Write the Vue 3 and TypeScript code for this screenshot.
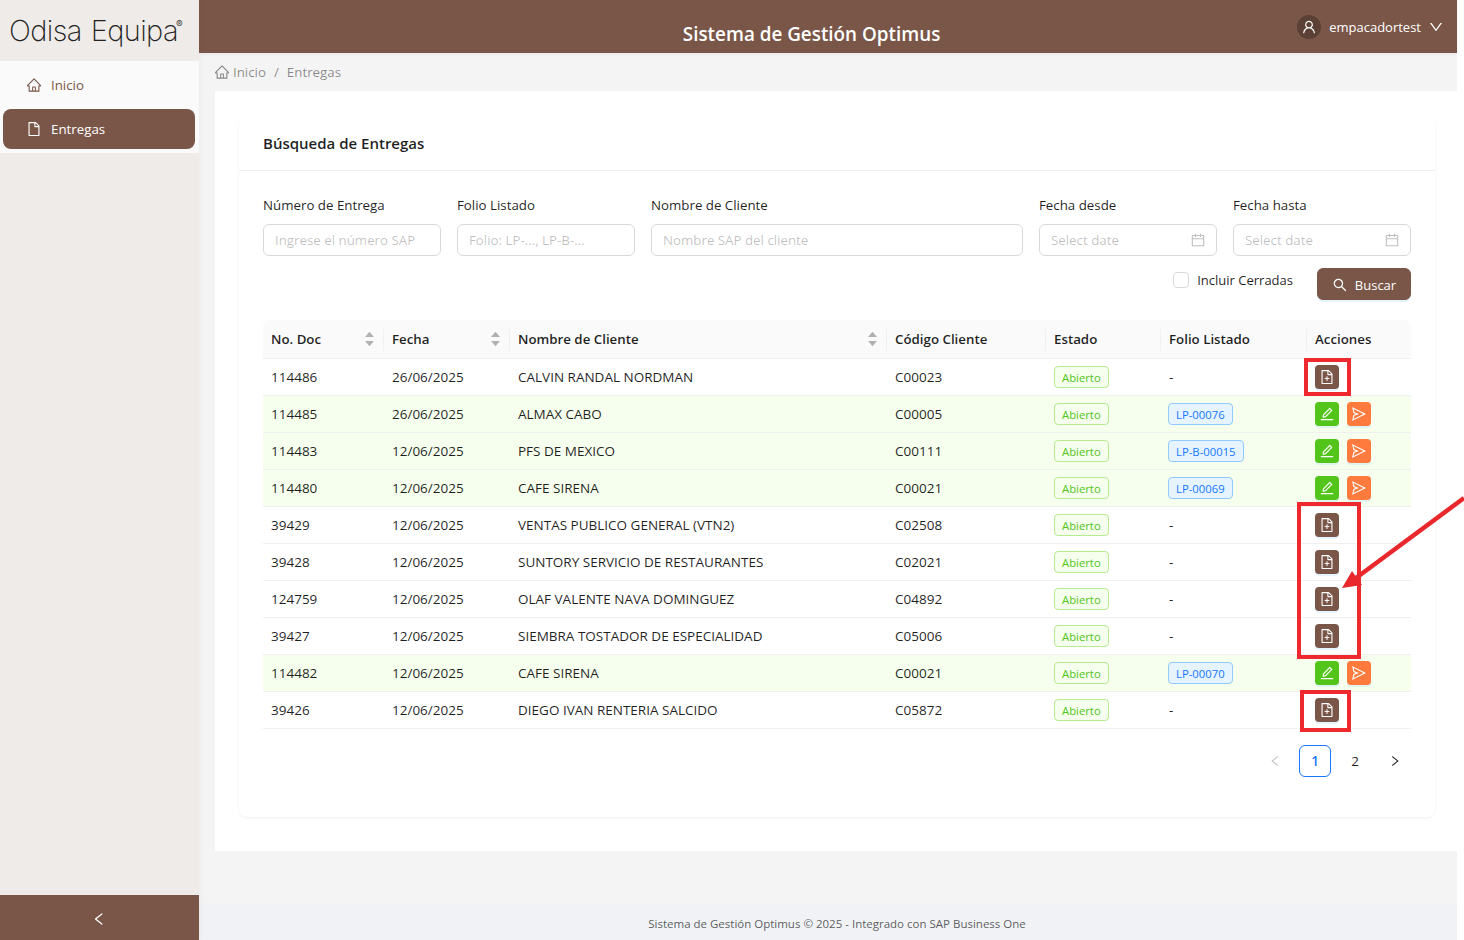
<script setup lang="ts">
const i = {
  home: 'M946.5 505L560.1 118.8l-25.9-25.9a31.5 31.5 0 0 0-44.4 0L77.5 505a63.9 63.9 0 0 0-18.8 46c.4 35.2 29.7 63.3 64.9 63.3h42.5V940h691.8V614.3h43.4c17.1 0 33.2-6.7 45.3-18.8a63.6 63.6 0 0 0 18.7-45.3c0-17-6.7-33.1-18.8-45.2zM568 868H456V664h112v204zm217.9-325.7V868H632V640c0-22.1-17.9-40-40-40H432c-22.1 0-40 17.9-40 40v228H238.1V542.3h-96l370-369.7 23.1 23.1L882 542.3h-96.1z',
  file: 'M854.6 288.6L639.4 73.4c-6-6-14.1-9.4-22.6-9.4H192c-17.7 0-32 14.3-32 32v832c0 17.7 14.3 32 32 32h640c17.7 0 32-14.3 32-32V311.3c0-8.5-3.4-16.7-9.4-22.7zM790.2 326H602V137.8L790.2 326zm1.8 562H232V136h302v216a42 42 0 0 0 42 42h216v494z',
  fileAdd: 'M854.6 288.6L639.4 73.4c-6-6-14.1-9.4-22.6-9.4H192c-17.7 0-32 14.3-32 32v832c0 17.7 14.3 32 32 32h640c17.7 0 32-14.3 32-32V311.3c0-8.5-3.4-16.7-9.4-22.7zM790.2 326H602V137.8L790.2 326zm1.8 562H232V136h302v216a42 42 0 0 0 42 42h216v494zM544 472c0-4.4-3.6-8-8-8h-48c-4.4 0-8 3.6-8 8v108H372c-4.4 0-8 3.6-8 8v48c0 4.4 3.6 8 8 8h108v108c0 4.4 3.6 8 8 8h48c4.4 0 8-3.6 8-8V644h108c4.4 0 8-3.6 8-8v-48c0-4.4-3.6-8-8-8H544V472z',
  edit: 'M257.7 752c2 0 4-.2 6-.5L431.9 722c2-.4 3.9-1.3 5.3-2.8l423.9-423.9a9.96 9.96 0 0 0 0-14.1L694.9 114.9c-1.9-1.9-4.4-2.9-7.1-2.9s-5.2 1-7.1 2.9L256.8 538.8c-1.5 1.5-2.4 3.3-2.8 5.3l-29.5 168.2a33.5 33.5 0 0 0 9.4 29.8c6.6 6.4 14.9 9.9 23.8 9.9zm67.4-174.4L687.8 215l73.3 73.3-362.7 362.6-88.9 15.7 15.6-89zM880 836H144c-17.7 0-32 14.3-32 32v36c0 4.4 3.6 8 8 8h784c4.4 0 8-3.6 8-8v-36c0-17.7-14.3-32-32-32z',
  send: 'M931.4 498.9L94.9 79.5c-3.4-1.7-7.3-2.1-11-1.2a15.99 15.99 0 0 0-11.7 19.3l86.2 352.2c1.3 5.3 5.2 9.6 10.4 11.3l147.7 50.7-147.6 50.7c-5.2 1.8-9.1 6-10.3 11.3L72.2 926.5c-.9 3.7-.5 7.6 1.2 10.9 3.9 7.9 13.5 11.1 21.5 7.2l836.5-417c3.1-1.5 5.6-4.1 7.2-7.1 3.9-8 .7-17.6-7.2-21.6zM170.8 826.3l50.3-205.6 295.2-101.3c2.3-.8 4.2-2.6 5-5 1.4-4.2-.8-8.7-5-10.2L221.1 403 171 198.2l628 314.9-628.2 313.2z',
  search: 'M909.6 854.5L649.9 594.8C690.2 542.7 712 479 712 412c0-80.2-31.3-155.4-87.9-212.1-56.6-56.7-132-87.9-212.1-87.9s-155.5 31.3-212.1 87.9C143.2 256.5 112 331.8 112 412c0 80.1 31.3 155.5 87.9 212.1C256.5 680.8 331.8 712 412 712c67 0 130.6-21.8 182.7-62l259.7 259.6a8.2 8.2 0 0 0 11.6 0l43.6-43.5a8.2 8.2 0 0 0 0-11.6zM570.4 570.4C528 612.7 471.8 636 412 636s-116-23.3-158.4-65.6C211.3 528 188 471.8 188 412s23.3-116.1 65.6-158.4C296 211.3 352.2 188 412 188s116.1 23.2 158.4 65.6S636 352.2 636 412s-23.3 116.1-65.6 158.4z',
  calendar: 'M880 184H712v-64c0-4.4-3.6-8-8-8h-56c-4.4 0-8 3.6-8 8v64H384v-64c0-4.4-3.6-8-8-8h-56c-4.4 0-8 3.6-8 8v64H144c-17.7 0-32 14.3-32 32v664c0 17.7 14.3 32 32 32h736c17.7 0 32-14.3 32-32V216c0-17.7-14.3-32-32-32zm-40 656H184V460h656v380zM184 392V256h128v48c0 4.4 3.6 8 8 8h56c4.4 0 8-3.6 8-8v-48h256v48c0 4.4 3.6 8 8 8h56c4.4 0 8-3.6 8-8v-48h128v136H184z',
  user: 'M858.5 763.6a374 374 0 0 0-80.6-119.5 375.63 375.63 0 0 0-119.5-80.6c-.4-.2-.8-.3-1.2-.5C719.5 518 760 444.7 760 362c0-137-111-248-248-248S264 225 264 362c0 82.7 40.5 156 102.8 201.1-.4.2-.8.3-1.2.5-44.8 18.9-85 46-119.5 80.6a375.63 375.63 0 0 0-80.6 119.5A371.7 371.7 0 0 0 136 901.8a8 8 0 0 0 8 8.2h60c4.4 0 7.9-3.5 8-7.8 2-77.2 33-149.5 87.8-204.3 56.7-56.7 132-87.9 212.2-87.9s155.5 31.2 212.2 87.9C779 752.7 810 825 812 902.2c.1 4.4 3.6 7.8 8 7.8h60a8 8 0 0 0 8-8.2c-1-47.8-10.9-94.3-29.5-138.2zM512 534c-45.9 0-89.1-17.9-121.6-50.4S340 407.9 340 362c0-45.9 17.9-89.1 50.4-121.6S466.1 190 512 190s89.1 17.9 121.6 50.4S684 316.1 684 362c0 45.9-17.9 89.1-50.4 121.6S557.9 534 512 534z',
  down: 'M884 256h-75c-5.1 0-9.9 2.5-12.9 6.6L512 654.2 227.9 262.6c-3-4.1-7.8-6.6-12.9-6.6h-75c-6.5 0-10.3 7.4-6.5 12.7l352.6 486.1c12.8 17.6 39 17.6 51.7 0l352.6-486.1c3.9-5.3.1-12.7-6.4-12.7z',
  left: 'M724 218.3V141c0-6.7-7.7-10.4-12.9-6.3L260.3 486.8a31.86 31.86 0 0 0 0 50.3l450.8 352.1c5.3 4.1 12.9.4 12.9-6.3v-77.3c0-4.9-2.3-9.6-6.1-12.6l-360-281 360-281.1c3.8-3 6.1-7.7 6.1-12.6z',
  right: 'M765.7 486.8L314.9 134.7A7.97 7.97 0 0 0 302 141v77.3c0 4.9 2.3 9.6 6.1 12.6l360 281.1-360 281.1c-3.9 3-6.1 7.7-6.1 12.6V883c0 6.7 7.7 10.4 12.9 6.3l450.8-352.1a31.96 31.96 0 0 0 0-50.4z',
  caretUp: 'M858.9 689L530.5 308.2c-9.4-10.9-27.5-10.9-37 0L165.1 689c-12.2 14.2-1.2 35 18.5 35h656.8c19.7 0 30.7-20.8 18.5-35z',
  caretDown: 'M840.4 300H183.6c-19.7 0-30.7 20.8-18.5 35l328.4 380.8c9.4 10.9 27.5 10.9 37 0L858.9 335c12.2-14.2 1.2-35-18.5-35z'
}

interface Row { doc: string; date: string; name: string; code: string; folio: string }
const rows: Row[] = [
  { doc: '114486', date: '26/06/2025', name: 'CALVIN RANDAL NORDMAN', code: 'C00023', folio: '' },
  { doc: '114485', date: '26/06/2025', name: 'ALMAX CABO', code: 'C00005', folio: 'LP-00076' },
  { doc: '114483', date: '12/06/2025', name: 'PFS DE MEXICO', code: 'C00111', folio: 'LP-B-00015' },
  { doc: '114480', date: '12/06/2025', name: 'CAFE SIRENA', code: 'C00021', folio: 'LP-00069' },
  { doc: '39429', date: '12/06/2025', name: 'VENTAS PUBLICO GENERAL (VTN2)', code: 'C02508', folio: '' },
  { doc: '39428', date: '12/06/2025', name: 'SUNTORY SERVICIO DE RESTAURANTES', code: 'C02021', folio: '' },
  { doc: '124759', date: '12/06/2025', name: 'OLAF VALENTE NAVA DOMINGUEZ', code: 'C04892', folio: '' },
  { doc: '39427', date: '12/06/2025', name: 'SIEMBRA TOSTADOR DE ESPECIALIDAD', code: 'C05006', folio: '' },
  { doc: '114482', date: '12/06/2025', name: 'CAFE SIRENA', code: 'C00021', folio: 'LP-00070' },
  { doc: '39426', date: '12/06/2025', name: 'DIEGO IVAN RENTERIA SALCIDO', code: 'C05872', folio: '' }
]
const heads = [
  { t: 'No. Doc', s: true }, { t: 'Fecha', s: true }, { t: 'Nombre de Cliente', s: true },
  { t: 'Código Cliente', s: false }, { t: 'Estado', s: false }, { t: 'Folio Listado', s: false }, { t: 'Acciones', s: false }
]
const fields = [
  { l: 'Número de Entrega', p: 'Ingrese el número SAP', c: '', cal: false },
  { l: 'Folio Listado', p: 'Folio: LP-..., LP-B-...', c: '', cal: false },
  { l: 'Nombre de Cliente', p: 'Nombre SAP del cliente', c: 'wide', cal: false },
  { l: 'Fecha desde', p: 'Select date', c: '', cal: true },
  { l: 'Fecha hasta', p: 'Select date', c: '', cal: true }
]
</script>

<template>
  <div class="root">
    <aside class="sider">
      <div class="logo"><span>Odisa</span><span class="logo-b">Equipa</span><sup>®</sup></div>
      <nav class="menu">
        <a class="item"><svg class="ic" viewBox="64 64 896 896"><path :d="i.home" /></svg>Inicio</a>
        <a class="item active"><svg class="ic" viewBox="64 64 896 896"><path :d="i.file" /></svg>Entregas</a>
      </nav>
      <div class="collapse"><svg class="ic" viewBox="64 64 896 896"><path :d="i.left" /></svg></div>
    </aside>

    <div class="main">
      <header class="top">
        <div class="title">Sistema de Gestión Optimus</div>
        <div class="user">
          <span class="avatar"><svg class="ic" viewBox="64 64 896 896"><path :d="i.user" /></svg></span>
          <span class="uname">empacadortest</span>
          <svg class="ic" viewBox="64 64 896 896"><path :d="i.down" /></svg>
        </div>
      </header>

      <div class="crumbs">
        <svg class="ic" viewBox="64 64 896 896"><path :d="i.home" /></svg>
        <span class="c1">Inicio</span><span class="sep">/</span><span>Entregas</span>
      </div>

      <div class="content">
        <section class="card">
          <h2 class="card-h">Búsqueda de Entregas</h2>
          <div class="card-b">
            <div class="form">
              <label v-for="f in fields" :key="f.l" class="field" :class="f.c">
                <span class="lab">{{ f.l }}</span>
                <span class="input"><span>{{ f.p }}</span><svg v-if="f.cal" class="ic" viewBox="64 64 896 896"><path :d="i.calendar" /></svg></span>
              </label>
            </div>
            <div class="tools">
              <span class="chk"><span class="box"></span><span>Incluir Cerradas</span></span>
              <button class="buscar" type="button"><svg class="ic" viewBox="64 64 896 896"><path :d="i.search" /></svg>Buscar</button>
            </div>

            <table class="tbl">
              <colgroup>
                <col class="c-a" /><col class="c-b" /><col class="c-c" /><col class="c-d" /><col class="c-e" /><col class="c-f" /><col class="c-g" />
              </colgroup>
              <thead>
                <tr>
                  <th v-for="h in heads" :key="h.t">
                    <span class="th-in">{{ h.t }}
                      <span v-if="h.s" class="sort">
                        <svg viewBox="64 64 896 896"><path :d="i.caretUp" /></svg>
                        <svg viewBox="64 64 896 896"><path :d="i.caretDown" /></svg>
                      </span>
                    </span>
                  </th>
                </tr>
              </thead>
              <tbody>
                <tr v-for="r in rows" :key="r.doc" :class="{ hl: r.folio }">
                  <td>{{ r.doc }}</td>
                  <td>{{ r.date }}</td>
                  <td>{{ r.name }}</td>
                  <td>{{ r.code }}</td>
                  <td><span class="tag green">Abierto</span></td>
                  <td><span v-if="r.folio" class="tag blue">{{ r.folio }}</span><template v-else>-</template></td>
                  <td>
                    <div class="acts">
                      <template v-if="r.folio">
                        <button class="act g" type="button"><svg class="ic" viewBox="64 64 896 896"><path :d="i.edit" /></svg></button>
                        <button class="act o" type="button"><svg class="ic" viewBox="64 64 896 896"><path :d="i.send" /></svg></button>
                      </template>
                      <button v-else class="act b" type="button"><svg class="ic" viewBox="64 64 896 896"><path :d="i.fileAdd" /></svg></button>
                    </div>
                  </td>
                </tr>
              </tbody>
            </table>

            <div class="pager">
              <span class="pg dis"><svg class="ic12" viewBox="64 64 896 896"><path :d="i.left" /></svg></span>
              <span class="pg cur">1</span>
              <span class="pg">2</span>
              <span class="pg"><svg class="ic12" viewBox="64 64 896 896"><path :d="i.right" /></svg></span>
            </div>
          </div>
        </section>
      </div>

      <footer class="foot">Sistema de Gestión Optimus © 2025 - Integrado con SAP Business One</footer>
    </div>

    <div class="mark m1"></div>
    <div class="mark m2"></div>
    <div class="mark m3"></div>
    <svg class="arrow" viewBox="0 0 1464 940" width="1464" height="940">
      <line x1="1464" y1="498" x2="1356" y2="578" stroke="#e8282d" stroke-width="4.5" />
      <polygon points="1342,588 1352,571 1362,585" fill="#e8282d" />
    </svg>
  </div>
</template>

<style>
html, body { margin: 0; background: #fff; }
</style>

<style scoped>
.root {
  position: relative; display: flex; width: 1457px; height: 940px; overflow: visible;
  font-family: "Open Sans", "Noto Sans", sans-serif; font-size: 13.3px; color: rgba(0,0,0,.88);
}
.ic { width: 14px; height: 14px; fill: currentColor; flex: none; display: block; }
.ic12 { width: 12px; height: 12px; fill: currentColor; display: block; }

.sider { position: relative; z-index: 1; width: 199px; flex: none; display: flex; flex-direction: column; background: #efebe8; box-shadow: 2px 0 6px rgba(0,0,0,.03); }
.logo { height: 61px; box-sizing: border-box; padding: 12px 0 0 9px; font-family: Inter, sans-serif; font-weight: 200; font-size: 29px; line-height: 38px; color: #222; white-space: nowrap; letter-spacing: -.6px; }
.logo-b { margin-left: 9px; }
.logo sup { font-size: 10px; line-height: 0; vertical-align: 13px; color: #444; letter-spacing: 0; margin-left: -2px; font-weight: 400; }
.menu { background: #fafafa; height: 92px; box-sizing: border-box; padding: 4px 4px 4px 3px; }
.item { display: flex; align-items: center; gap: 10px; height: 40px; padding-left: 24px; border-radius: 8px; color: #7a5648; }
.item + .item { margin-top: 4px; }
.item.active { background: #7a5648; color: #fff; }
.collapse { margin-top: auto; height: 45px; box-sizing: border-box; padding: 3px 2px 0 0; background: #7a5648; color: #fff; display: flex; align-items: center; justify-content: center; }

.main { flex: 1; min-width: 0; display: flex; flex-direction: column; background: #f4f4f4; }
.top { position: relative; height: 53px; flex: none; background: #7a5648; color: #fff; display: flex; align-items: center; padding-right: 14px; box-shadow: 0 1px 4px rgba(0,0,0,.06); }
.title { flex: 1; text-align: center; font-size: 18.85px; font-weight: 600; padding: 14px 16px 0 143px; line-height: 26px; }
.user { display: flex; align-items: center; gap: 8px; }
.avatar { width: 24px; height: 24px; border-radius: 50%; background: #5b4035; display: flex; align-items: center; justify-content: center; }
.uname { font-size: 13px; }
.crumbs { height: 38px; flex: none; display: flex; align-items: center; padding-left: 16px; gap: 4px; color: rgba(0,0,0,.45); }
.sep { margin: 0 4px; }
.content { margin-left: 16px; height: 760px; flex: none; background: #fff; padding: 24px 22px 0 24px; box-sizing: border-box; }
.card { height: 702px; border-radius: 8px; background: #fff; box-shadow: 0 1px 2px rgba(0,0,0,.03), 0 1px 6px -1px rgba(0,0,0,.02), 0 2px 4px rgba(0,0,0,.02); }
.card-h { margin: 0; height: 56px; box-sizing: border-box; padding: 0 24px; border-bottom: 1px solid #f0f0f0; font-size: 15px; font-weight: 600; display: flex; align-items: center; }
.card-b { padding: 23px 24px 0; }
.form { display: grid; grid-template-columns: repeat(6, 178px); column-gap: 16px; }
.field { display: flex; flex-direction: column; }
.field.wide { grid-column: span 2; }
.lab { height: 22px; line-height: 22px; margin-bottom: 8px; }
.input { height: 32px; box-sizing: border-box; border: 1px solid #d9d9d9; border-radius: 6px; padding: 0 11px; display: flex; align-items: center; justify-content: space-between; color: rgba(0,0,0,.25); background: #fff; }
.tools { display: flex; justify-content: flex-end; align-items: flex-start; margin-top: 12px; height: 32px; }
.chk { display: flex; align-items: center; gap: 8px; height: 24px; margin-right: 24px; font-size: 13px; }
.box { width: 16px; height: 16px; box-sizing: border-box; border: 1px solid #d9d9d9; border-radius: 4px; background: #fff; }
.buscar { width: 94px; height: 32px; border: 1px solid #7a5648; border-radius: 6px; background: #7a5648; color: #fff; font: inherit; font-size: 13px; display: flex; align-items: center; justify-content: center; gap: 8px; box-shadow: 0 2px 0 rgba(5,145,255,.1); padding: 2px 0 0 1px; }
.tbl { width: 1148px; margin-top: 20px; border-collapse: separate; border-spacing: 0; table-layout: fixed; }
.c-a { width: 121px; } .c-b { width: 126px; } .c-c { width: 377px; } .c-d { width: 159px; } .c-e { width: 115px; } .c-f { width: 146px; } .c-g { width: 104px; }
.tbl th { height: 38px; padding: 0 8px; background: #fafafa; border-bottom: 1px solid #f0f0f0; text-align: left; font-weight: 600; position: relative; }
.tbl th:first-child { border-top-left-radius: 8px; }
.tbl th:last-child { border-top-right-radius: 8px; }
.tbl th + th::before { content: ""; position: absolute; left: -1px; top: 9px; height: 22px; width: 1px; background: #f0f0f0; }
.th-in { display: flex; align-items: center; justify-content: space-between; }
.sort { display: flex; flex-direction: column; color: rgba(0,0,0,.29); margin-right: 1px; }
.sort svg { width: 11px; height: 11px; fill: currentColor; display: block; }
.sort svg + svg { margin-top: -2.4px; }
.tbl td { height: 36px; padding: 0 8px; border-bottom: 1px solid #f0f0f0; white-space: nowrap; font-size: 13.5px; }
.tbl tr.hl td { background: #f6ffed; }
.tag { display: block; width: fit-content; height: 22px; line-height: 21px; box-sizing: border-box; padding: 0 7px; border: 1px solid; border-radius: 4px; font-size: 11.3px; }
.tag.green { color: #52c41a; background: #f6ffed; border-color: #b7eb8f; }
.tag.blue { color: #1677ff; background: #e6f4ff; border-color: #91caff; margin-left: -1px; }
.acts { display: flex; gap: 8px; }
.act { width: 24px; height: 24px; border: 0; border-radius: 4px; color: #fff; padding: 0; display: flex; align-items: center; justify-content: center; box-shadow: 0 2px 0 rgba(5,145,255,.1); }
.act.b { background: #7a5648; }
.act.g { background: #52c41a; }
.act.o { background: #ff7a3d; }
.pager { display: flex; justify-content: flex-end; gap: 8px; margin-top: 16px; font-size: 13.5px; }
.pg { width: 32px; height: 32px; box-sizing: border-box; display: flex; align-items: center; justify-content: center; border-radius: 6px; }
.pg.dis { color: rgba(0,0,0,.25); }
.pg.cur { border: 1px solid #1677ff; color: #1677ff; font-weight: 600; }
.foot { margin-top: auto; height: 37px; flex: none; background: #f0f2f5; padding: 3px 0 0 18px; display: flex; align-items: center; justify-content: center; font-size: 11.5px; color: rgba(0,0,0,.65); box-sizing: border-box; }

.mark { position: absolute; z-index: 2; box-sizing: border-box; border: 4px solid #ee2a2e; pointer-events: none; }
.m1 { left: 1304px; top: 358px; width: 47px; height: 38px; }
.m2 { left: 1297px; top: 502px; width: 64px; height: 157px; }
.m3 { left: 1300px; top: 690px; width: 51px; height: 42px; }
.arrow { position: absolute; z-index: 3; left: 0; top: 0; pointer-events: none; }
</style>
